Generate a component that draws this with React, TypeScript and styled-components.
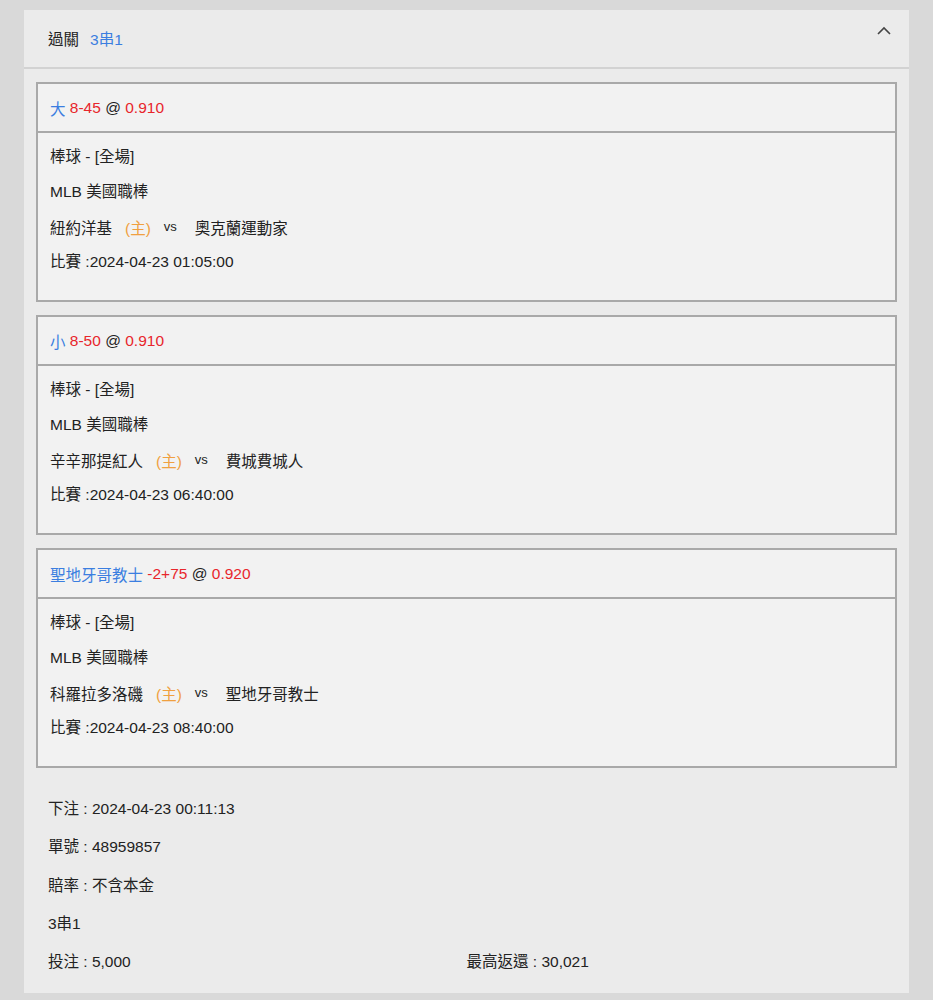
import * as React from "react";
import styled, { createGlobalStyle } from "styled-components";

const GlobalStyle = createGlobalStyle`
  html, body {
    margin: 0;
    padding: 0;
    background: #d9d9d9;
  }
  body {
    font-family: "Liberation Sans", "Noto Sans CJK TC", sans-serif;
    color: #222;
    font-size: 15.5px;
  }
`;

const Page = styled.div`
  padding: 10px 24px 7px;
`;

const Panel = styled.section`
  background: #ebebeb;
  padding-bottom: 12px;
`;

const PanelHeader = styled.header`
  display: flex;
  align-items: center;
  justify-content: space-between;
  padding: 0 24px;
  border-bottom: 2px solid #d2d2d2;
  box-sizing: border-box;
  height: 59px;
`;

const HeaderTitle = styled.div`
  display: flex;
  gap: 11px;
  margin-top: -2px;
`;

const Blue = styled.span`
  color: #3b7ee0;
`;

const Red = styled.span`
  color: #e8262c;
`;

const Orange = styled.span`
  color: #f0a040;
`;

const Toggle = styled.button`
  border: 0;
  background: none;
  padding: 0;
  margin-top: -16px;
  margin-right: -7px;
  display: flex;
  cursor: pointer;
`;

const Body = styled.div`
  padding: 13px 12px 13px;
  display: flex;
  flex-direction: column;
  gap: 13px;
`;

const Card = styled.div`
  border: 2px solid #a9a9a9;
  background: #f2f2f2;
`;

const CardHead = styled.div`
  height: 47px;
  display: flex;
  align-items: center;
  padding: 0 12px;
  border-bottom: 2px solid #a9a9a9;
  margin-top: -1px;
  padding-top: 1px;
`;

const CardBody = styled.div`
  padding: 6px 12px 21px;
`;

const Line = styled.div`
  line-height: 35px;
  height: 35px;
  white-space: pre;
`;

const Versus = styled.span`
  font-size: 13px;
  vertical-align: 3px;
  margin: 0 18px 0 13px;
`;

const Team = styled.span``;

const Home = styled(Orange)`
  margin-left: 13px;
`;

const Footer = styled.div`
  display: grid;
  grid-template-columns: 1fr 1fr;
  padding: 9px 24px 0;
`;

const FootLine = styled.div<{ $full?: boolean }>`
  line-height: 38.3px;
  grid-column: ${(p) => (p.$full ? "1 / -1" : "auto")};
`;

const bets = [
  {
    pick: "大",
    line: "8-45",
    odds: "0.910",
    home: "紐約洋基",
    away: "奧克蘭運動家",
    time: "2024-04-23 01:05:00",
  },
  {
    pick: "小",
    line: "8-50",
    odds: "0.910",
    home: "辛辛那提紅人",
    away: "費城費城人",
    time: "2024-04-23 06:40:00",
  },
  {
    pick: "聖地牙哥教士",
    line: "-2+75",
    odds: "0.920",
    home: "科羅拉多洛磯",
    away: "聖地牙哥教士",
    time: "2024-04-23 08:40:00",
  },
];

function Chevron() {
  return (
    <svg width="16" height="10" viewBox="0 0 16 10" fill="none">
      <path d="M2 8 L8 2 L14 8" stroke="#444" strokeWidth="1.6" />
    </svg>
  );
}

export default function App() {
  return (
    <Page>
      <GlobalStyle />
      <Panel>
        <PanelHeader>
          <HeaderTitle>
            <span>過關</span>
            <Blue>3串1</Blue>
          </HeaderTitle>
          <Toggle aria-label="收合">
            <Chevron />
          </Toggle>
        </PanelHeader>
        <Body>
          {bets.map((b, i) => (
            <Card key={i}>
              <CardHead>
                <Blue>{b.pick}</Blue>&nbsp;<Red>{b.line}</Red>&nbsp;@&nbsp;
                <Red>{b.odds}</Red>
              </CardHead>
              <CardBody>
                <Line>棒球 - [全場]</Line>
                <Line>MLB 美國職棒</Line>
                <Line>
                  <Team>{b.home}</Team>
                  <Home>(主)</Home>
                  <Versus>vs</Versus>
                  <Team>{b.away}</Team>
                </Line>
                <Line>比賽 :{b.time}</Line>
              </CardBody>
            </Card>
          ))}
        </Body>
        <Footer>
          <FootLine $full>下注 : 2024-04-23 00:11:13</FootLine>
          <FootLine $full>單號 : 48959857</FootLine>
          <FootLine $full>賠率 : 不含本金</FootLine>
          <FootLine $full>3串1</FootLine>
          <FootLine>投注 : 5,000</FootLine>
          <FootLine>最高返還 : 30,021</FootLine>
        </Footer>
      </Panel>
    </Page>
  );
}
